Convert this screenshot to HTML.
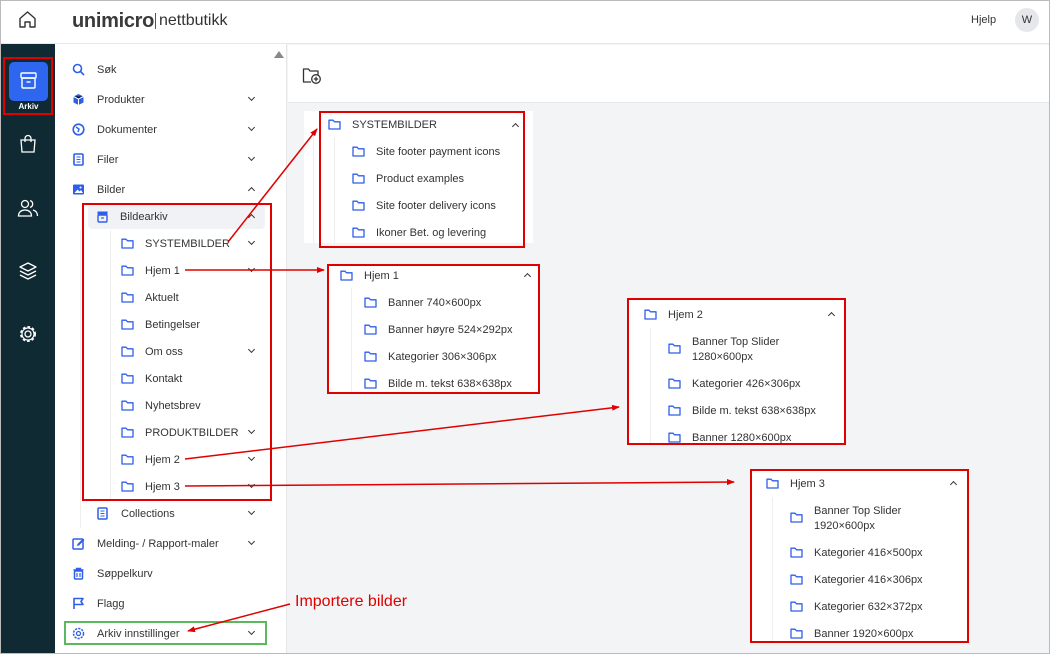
<!DOCTYPE html>
<html><head><meta charset="utf-8"><style>
*{margin:0;padding:0;box-sizing:border-box}
body{width:1050px;height:654px;position:relative;overflow:hidden;font-family:"Liberation Sans",sans-serif;font-size:11px;color:#333;background:#f3f4f6}
.a{position:absolute;white-space:nowrap}
.t{position:absolute;white-space:nowrap;line-height:14px;margin-top:1px}
.dn,.up{position:absolute;width:5px;height:5px;border-right:1.5px solid #333;border-bottom:1.5px solid #333}
.dn{transform:rotate(45deg)}
.up{transform:rotate(-135deg)}
.f{position:absolute;width:13px;height:11px}
.ic{position:absolute;width:13px;height:13px}
.rb{position:absolute;border:2px solid #e00000}
</style></head><body>
<svg width="0" height="0" style="position:absolute"><defs>
<symbol id="fold" viewBox="0 0 13 11"><path d="M1 1.2h4l1.5 1.6H12v7.2H1z" fill="none" stroke="#2f5fe8" stroke-width="1.3" stroke-linejoin="round"/></symbol>
</defs></svg>

<div class="a" style="left:0;top:0;width:1050px;height:44px;background:#fff;border-bottom:1px solid #e5e7eb"></div>
<svg class="a" style="top:10px;left:18px" width="19" height="19" viewBox="0 0 19 19"><path d="M2 8.5L9.5 2 17 8.5V17H12v-5H7v5H2z" fill="none" stroke="#333" stroke-width="1.4" stroke-linejoin="round"/></svg>
<div class="a" style="left:72px;top:10px;font-size:20px;font-weight:bold;color:#3a3a3a;letter-spacing:-0.3px">unimicro</div>
<div class="a" style="left:155px;top:13px;width:1px;height:16px;background:#555"></div>
<div class="a" style="left:159px;top:12px;font-size:16px;color:#333">nettbutikk</div>
<div class="a" style="left:971px;top:14px;font-size:11px">Hjelp</div>
<div class="a" style="left:1015px;top:8px;width:24px;height:24px;border-radius:50%;background:#e5e7eb;text-align:center;line-height:24px;font-size:11px">W</div>

<div class="a" style="left:0;top:44px;width:55px;height:610px;background:#0f2a33"></div>
<div class="a" style="left:9px;top:62px;width:39px;height:39px;border-radius:5px;background:#2f66f0"></div>
<svg class="a" style="left:19px;top:71px" width="19" height="19" viewBox="0 0 19 19"><rect x="2" y="2" width="15" height="5" rx="1" fill="none" stroke="#fff" stroke-width="1.4"/><rect x="3" y="7" width="13" height="10" rx="1" fill="none" stroke="#fff" stroke-width="1.4"/><path d="M7.5 11h4" stroke="#fff" stroke-width="1.4"/></svg>
<div class="a" style="left:0;top:102px;width:57px;text-align:center;color:#fff;font-size:8px;font-weight:bold">Arkiv</div>
<div class="rb" style="left:3px;top:57px;width:50px;height:58px"></div>
<svg class="a" style="left:18px;top:134px" width="20" height="20" viewBox="0 0 20 20"><path d="M3 6h14l-1 12H4z" fill="none" stroke="#fff" stroke-width="1.3"/><path d="M7 8V4.5a3 3 0 016 0V8" fill="none" stroke="#fff" stroke-width="1.3"/></svg>
<svg class="a" style="left:17px;top:198px" width="22" height="20" viewBox="0 0 22 20"><circle cx="8" cy="6" r="3.5" fill="none" stroke="#fff" stroke-width="1.3"/><path d="M1.5 18c0-4 3-6 6.5-6s6.5 2 6.5 6z" fill="none" stroke="#fff" stroke-width="1.3"/><path d="M13 2.6a3.5 3.5 0 010 6.8M16 12c2.5.6 4.5 2.5 4.5 6" fill="none" stroke="#fff" stroke-width="1.3"/></svg>
<svg class="a" style="left:18px;top:261px" width="20" height="20" viewBox="0 0 20 20"><path d="M10 2l8 4-8 4-8-4z" fill="none" stroke="#fff" stroke-width="1.3" stroke-linejoin="round"/><path d="M2 10l8 4 8-4M2 14l8 4 8-4" fill="none" stroke="#fff" stroke-width="1.3" stroke-linejoin="round"/></svg>
<svg class="a" style="left:18px;top:324px" width="20" height="20" viewBox="0 0 20 20"><circle cx="10" cy="10" r="3" fill="none" stroke="#fff" stroke-width="1.3"/><circle cx="10" cy="10" r="7" fill="none" stroke="#fff" stroke-width="2" stroke-dasharray="2.6 2"/><circle cx="10" cy="10" r="6" fill="none" stroke="#fff" stroke-width="1.2"/></svg>

<div class="a" style="left:55px;top:44px;width:232px;height:610px;background:#fff;border-right:1px solid #e5e7eb"></div>
<div class="a" style="left:274px;top:51px;width:0;height:0;border-left:5px solid transparent;border-right:5px solid transparent;border-bottom:7px solid #888"></div>
<div class="a" style="left:88px;top:205px;width:177px;height:24px;background:#f1f2f5;border-radius:4px"></div>
<div class="a" style="left:80px;top:230px;width:1px;height:298px;background:#eee"></div>
<div class="a" style="left:110px;top:230px;width:1px;height:270px;background:#eee"></div>

<svg class="ic" style="left:72px;top:63px" viewBox="0 0 13 13"><circle cx="5.5" cy="5.5" r="4" fill="none" stroke="#2f5fe8" stroke-width="1.6"/><path d="M8.5 8.5L12 12" stroke="#2f5fe8" stroke-width="1.6"/></svg>
<svg class="ic" style="left:72px;top:93px" viewBox="0 0 13 13"><path d="M6.5 1l5 2.5v6L6.5 12l-5-2.5v-6z" fill="#2f5fe8"/><path d="M1.5 3.5l5 2.5 5-2.5M6.5 6v6" stroke="#fff" stroke-width="1"/></svg>
<svg class="ic" style="left:72px;top:123px" viewBox="0 0 13 13"><circle cx="6.5" cy="6.5" r="5.3" fill="none" stroke="#2f5fe8" stroke-width="1.6"/><path d="M4 4l3 2-1 3" fill="none" stroke="#2f5fe8" stroke-width="1.4"/></svg>
<svg class="ic" style="left:72px;top:153px" viewBox="0 0 13 13"><rect x="2" y="1" width="9" height="11" rx="1" fill="none" stroke="#2f5fe8" stroke-width="1.6"/><path d="M4.5 4h4M4.5 6.5h4M4.5 9h4" stroke="#2f5fe8" stroke-width="1.1"/></svg>
<svg class="ic" style="left:72px;top:183px" viewBox="0 0 13 13"><rect x="1" y="1.5" width="11" height="10" rx="1" fill="#2f5fe8"/><path d="M2.5 10l3-3.5 2 2 1.5-1.5 2 3z" fill="#fff"/><circle cx="8.5" cy="4.5" r="1" fill="#fff"/></svg>
<svg class="ic" style="left:96px;top:210px" viewBox="0 0 13 13"><rect x="1.5" y="1.5" width="10" height="3" fill="#2f5fe8"/><rect x="2" y="5" width="9" height="7" rx="1" fill="none" stroke="#2f5fe8" stroke-width="1.4"/><path d="M5 8h3" stroke="#2f5fe8" stroke-width="1.2"/></svg>
<svg class="ic" style="left:96px;top:507px" viewBox="0 0 13 13"><rect x="2" y="1" width="9" height="11" rx="1" fill="none" stroke="#2f5fe8" stroke-width="1.5"/><path d="M4.5 4h4M4.5 6.5h4M4.5 9h4" stroke="#2f5fe8" stroke-width="1.1"/></svg>
<svg class="ic" style="left:72px;top:537px" viewBox="0 0 13 13"><rect x="1" y="2" width="10" height="10" rx="1" fill="none" stroke="#2f5fe8" stroke-width="1.5"/><path d="M5 9l.5-2L11 1.5l1.5 1.5L7 8.5z" fill="#2f5fe8"/></svg>
<svg class="ic" style="left:72px;top:567px" viewBox="0 0 13 13"><path d="M1.5 3h10M4.5 3V1.5h4V3" fill="none" stroke="#2f5fe8" stroke-width="1.4"/><rect x="2.5" y="4" width="8" height="8" rx="1" fill="none" stroke="#2f5fe8" stroke-width="1.5"/><path d="M5 6v4M8 6v4" stroke="#2f5fe8" stroke-width="1.2"/></svg>
<svg class="ic" style="left:72px;top:597px" viewBox="0 0 13 13"><path d="M2 12V1.5h9l-2 3 2 3H2" fill="none" stroke="#2f5fe8" stroke-width="1.6" stroke-linejoin="round"/></svg>
<svg class="ic" style="left:72px;top:627px" viewBox="0 0 13 13"><circle cx="6.5" cy="6.5" r="2" fill="none" stroke="#2f5fe8" stroke-width="1.3"/><circle cx="6.5" cy="6.5" r="5" fill="none" stroke="#2f5fe8" stroke-width="1.5" stroke-dasharray="2.2 1.1"/></svg>

<div class="t" style="left:97px;top:62px">Søk</div>
<div class="t" style="left:97px;top:92px">Produkter</div><div class="dn" style="left:249px;top:95px"></div>
<div class="t" style="left:97px;top:122px">Dokumenter</div><div class="dn" style="left:249px;top:125px"></div>
<div class="t" style="left:97px;top:152px">Filer</div><div class="dn" style="left:249px;top:155px"></div>
<div class="t" style="left:97px;top:182px">Bilder</div><div class="up" style="left:249px;top:188px"></div>
<div class="t" style="left:120px;top:209px">Bildearkiv</div><div class="up" style="left:249px;top:215px"></div>

<svg class="f" style="left:121px;top:238px"><use href="#fold"/></svg><div class="t" style="left:145px;top:236px">SYSTEMBILDER</div><div class="dn" style="left:249px;top:239px"></div>
<svg class="f" style="left:121px;top:265px"><use href="#fold"/></svg><div class="t" style="left:145px;top:263px">Hjem 1</div><div class="dn" style="left:249px;top:266px"></div>
<svg class="f" style="left:121px;top:292px"><use href="#fold"/></svg><div class="t" style="left:145px;top:290px">Aktuelt</div>
<svg class="f" style="left:121px;top:319px"><use href="#fold"/></svg><div class="t" style="left:145px;top:317px">Betingelser</div>
<svg class="f" style="left:121px;top:346px"><use href="#fold"/></svg><div class="t" style="left:145px;top:344px">Om oss</div><div class="dn" style="left:249px;top:347px"></div>
<svg class="f" style="left:121px;top:373px"><use href="#fold"/></svg><div class="t" style="left:145px;top:371px">Kontakt</div>
<svg class="f" style="left:121px;top:400px"><use href="#fold"/></svg><div class="t" style="left:145px;top:398px">Nyhetsbrev</div>
<svg class="f" style="left:121px;top:427px"><use href="#fold"/></svg><div class="t" style="left:145px;top:425px">PRODUKTBILDER</div><div class="dn" style="left:249px;top:428px"></div>
<svg class="f" style="left:121px;top:454px"><use href="#fold"/></svg><div class="t" style="left:145px;top:452px">Hjem 2</div><div class="dn" style="left:249px;top:455px"></div>
<svg class="f" style="left:121px;top:481px"><use href="#fold"/></svg><div class="t" style="left:145px;top:479px">Hjem 3</div><div class="dn" style="left:249px;top:482px"></div>
<div class="t" style="left:121px;top:506px">Collections</div><div class="dn" style="left:249px;top:509px"></div>
<div class="t" style="left:97px;top:536px">Melding- / Rapport-maler</div><div class="dn" style="left:249px;top:539px"></div>
<div class="t" style="left:97px;top:566px">Søppelkurv</div>
<div class="t" style="left:97px;top:596px">Flagg</div>
<div class="t" style="left:97px;top:626px">Arkiv innstillinger</div><div class="dn" style="left:249px;top:629px"></div>
<div class="rb" style="left:82px;top:203px;width:190px;height:298px"></div>
<div class="a" style="left:64px;top:621px;width:203px;height:24px;border:2px solid #5cb85c"></div>

<div class="a" style="left:288px;top:45px;width:762px;height:58px;background:#fff;border-bottom:1px solid #e5e7eb"></div>
<svg class="a" style="left:302px;top:67px" width="20" height="18" viewBox="0 0 20 18"><path d="M9 15H1.5V2h5l1.5 2h8v4" fill="none" stroke="#333" stroke-width="1.3" stroke-linejoin="round"/><circle cx="14" cy="12" r="4.3" fill="none" stroke="#333" stroke-width="1.3"/><path d="M14 9.8v4.4M11.8 12h4.4" stroke="#333" stroke-width="1.3"/></svg>

<div class="a" style="left:304px;top:111px;width:229px;height:132px;background:#fff"></div>
<div class="a" style="left:313px;top:135px;width:1px;height:108px;background:#eee"></div>
<div class="a" style="left:334px;top:137px;width:1px;height:106px;background:#eee"></div>
<svg class="f" style="left:328px;top:119px"><use href="#fold"/></svg><div class="t" style="left:352px;top:117px">SYSTEMBILDER</div><div class="up" style="left:513px;top:124px"></div>
<svg class="f" style="left:352px;top:146px"><use href="#fold"/></svg><div class="t" style="left:376px;top:144px">Site footer payment icons</div>
<svg class="f" style="left:352px;top:173px"><use href="#fold"/></svg><div class="t" style="left:376px;top:171px">Product examples</div>
<svg class="f" style="left:352px;top:200px"><use href="#fold"/></svg><div class="t" style="left:376px;top:198px">Site footer delivery icons</div>
<svg class="f" style="left:352px;top:227px"><use href="#fold"/></svg><div class="t" style="left:376px;top:225px">Ikoner Bet. og levering</div>
<div class="rb" style="left:319px;top:111px;width:206px;height:137px"></div>

<div class="a" style="left:327px;top:264px;width:213px;height:130px;background:#fff"></div>
<div class="a" style="left:351px;top:288px;width:1px;height:105px;background:#eee"></div>
<svg class="f" style="left:340px;top:270px"><use href="#fold"/></svg><div class="t" style="left:364px;top:268px">Hjem 1</div><div class="up" style="left:525px;top:274px"></div>
<svg class="f" style="left:364px;top:297px"><use href="#fold"/></svg><div class="t" style="left:388px;top:295px">Banner 740×600px</div>
<svg class="f" style="left:364px;top:324px"><use href="#fold"/></svg><div class="t" style="left:388px;top:322px">Banner høyre 524×292px</div>
<svg class="f" style="left:364px;top:351px"><use href="#fold"/></svg><div class="t" style="left:388px;top:349px">Kategorier 306×306px</div>
<svg class="f" style="left:364px;top:378px"><use href="#fold"/></svg><div class="t" style="left:388px;top:376px">Bilde m. tekst 638×638px</div>
<div class="rb" style="left:327px;top:264px;width:213px;height:130px"></div>

<div class="a" style="left:627px;top:298px;width:219px;height:147px;background:#fff"></div>
<div class="a" style="left:650px;top:328px;width:1px;height:116px;background:#eee"></div>
<svg class="f" style="left:644px;top:309px"><use href="#fold"/></svg><div class="t" style="left:668px;top:307px">Hjem 2</div><div class="up" style="left:829px;top:313px"></div>
<svg class="f" style="left:668px;top:343px"><use href="#fold"/></svg><div class="t" style="left:692px;top:334px;line-height:15px">Banner Top Slider<br>1280×600px</div>
<svg class="f" style="left:668px;top:378px"><use href="#fold"/></svg><div class="t" style="left:692px;top:376px">Kategorier 426×306px</div>
<svg class="f" style="left:668px;top:405px"><use href="#fold"/></svg><div class="t" style="left:692px;top:403px">Bilde m. tekst 638×638px</div>
<svg class="f" style="left:668px;top:432px"><use href="#fold"/></svg><div class="t" style="left:692px;top:430px">Banner 1280×600px</div>
<div class="rb" style="left:627px;top:298px;width:219px;height:147px"></div>

<div class="a" style="left:750px;top:469px;width:219px;height:174px;background:#fff"></div>
<div class="a" style="left:772px;top:497px;width:1px;height:145px;background:#eee"></div>
<svg class="f" style="left:766px;top:478px"><use href="#fold"/></svg><div class="t" style="left:790px;top:476px">Hjem 3</div><div class="up" style="left:951px;top:482px"></div>
<svg class="f" style="left:790px;top:512px"><use href="#fold"/></svg><div class="t" style="left:814px;top:503px;line-height:15px">Banner Top Slider<br>1920×600px</div>
<svg class="f" style="left:790px;top:547px"><use href="#fold"/></svg><div class="t" style="left:814px;top:545px">Kategorier 416×500px</div>
<svg class="f" style="left:790px;top:574px"><use href="#fold"/></svg><div class="t" style="left:814px;top:572px">Kategorier 416×306px</div>
<svg class="f" style="left:790px;top:601px"><use href="#fold"/></svg><div class="t" style="left:814px;top:599px">Kategorier 632×372px</div>
<svg class="f" style="left:790px;top:628px"><use href="#fold"/></svg><div class="t" style="left:814px;top:626px">Banner 1920×600px</div>
<div class="rb" style="left:750px;top:469px;width:219px;height:174px"></div>

<div class="a" style="left:295px;top:593px;font-size:16px;color:#e00000">Importere bilder</div>

<svg class="a" style="left:0;top:0" width="1050" height="654">
<defs><marker id="ah" markerWidth="8" markerHeight="6" refX="7" refY="3" orient="auto" markerUnits="userSpaceOnUse"><path d="M0 0L8 3 0 6z" fill="#e00000"/></marker></defs>
<g stroke="#e00000" stroke-width="1.5" fill="none" marker-end="url(#ah)">
<line x1="228" y1="242" x2="317" y2="129"/>
<line x1="185" y1="270" x2="324" y2="270"/>
<line x1="185" y1="459" x2="619" y2="407"/>
<line x1="185" y1="486" x2="734" y2="482"/>
<line x1="290" y1="604" x2="188" y2="631"/>
</g></svg>

<div class="a" style="left:0;top:0;width:1050px;height:654px;border:1px solid #bbb"></div>
</body></html>
